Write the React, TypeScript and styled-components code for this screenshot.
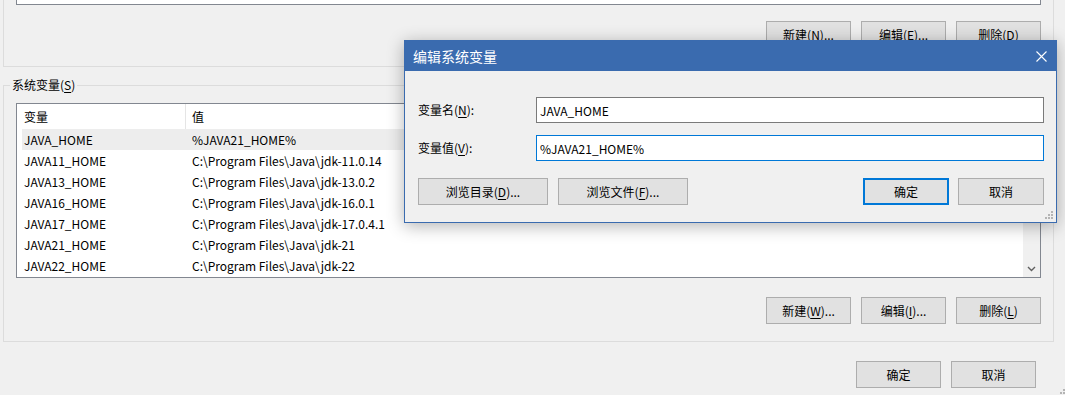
import React from 'react';
import styled, { createGlobalStyle, css } from 'styled-components';

const GlobalStyle = createGlobalStyle`
  html, body {
    margin: 0;
    padding: 0;
    background: #f0f0f0;
  }
  body {
    font-family: "Noto Sans CJK SC", "Microsoft YaHei", sans-serif;
    font-size: 12px;
    color: #000;
  }
`;

const variables = [
  ['JAVA_HOME', '%JAVA21_HOME%'],
  ['JAVA11_HOME', 'C:\\Program Files\\Java\\jdk-11.0.14'],
  ['JAVA13_HOME', 'C:\\Program Files\\Java\\jdk-13.0.2'],
  ['JAVA16_HOME', 'C:\\Program Files\\Java\\jdk-16.0.1'],
  ['JAVA17_HOME', 'C:\\Program Files\\Java\\jdk-17.0.4.1'],
  ['JAVA21_HOME', 'C:\\Program Files\\Java\\jdk-21'],
  ['JAVA22_HOME', 'C:\\Program Files\\Java\\jdk-22'],
];

const Grip = () => (
  <svg width='8' height='8' viewBox='0 0 8 8'>
    <rect x='6' y='0' width='2' height='2' fill='#b4b4b4' />
    <rect x='3' y='3' width='2' height='2' fill='#b4b4b4' />
    <rect x='6' y='3' width='2' height='2' fill='#b4b4b4' />
    <rect x='0' y='6' width='2' height='2' fill='#b4b4b4' />
    <rect x='3' y='6' width='2' height='2' fill='#b4b4b4' />
    <rect x='6' y='6' width='2' height='2' fill='#b4b4b4' />
  </svg>
);

const App = () => {
  return (
    <>
      <GlobalStyle />
      <Page>
        <UserGroup>
          <ListStub />
          <ButtonRow>
            <Button>
              新建(<Key>N</Key>)...
            </Button>
            <Button>
              编辑(<Key>E</Key>)...
            </Button>
            <Button>
              删除(<Key>D</Key>)
            </Button>
          </ButtonRow>
        </UserGroup>

        <SystemGroup>
          <Legend>
            系统变量(<Key>S</Key>)
          </Legend>
          <ListBox>
            <ListMain>
              <Header>
                <HeaderCell $first>变量</HeaderCell>
                <HeaderCell>值</HeaderCell>
              </Header>
              {variables.map(([name, value], index) => (
                <Row key={name} $selected={index === 0}>
                  <Cell>{name}</Cell>
                  <Cell>{value}</Cell>
                </Row>
              ))}
            </ListMain>
            <ScrollBar>
              <ArrowBox>
                <svg width='9' height='6' viewBox='0 0 9 6'>
                  <path d='M1 1 L4.5 4.5 L8 1' fill='none' stroke='#606060' strokeWidth='1.4' />
                </svg>
              </ArrowBox>
            </ScrollBar>
          </ListBox>
          <ButtonRow $top={19}>
            <Button>
              新建(<Key>W</Key>)...
            </Button>
            <Button>
              编辑(<Key>I</Key>)...
            </Button>
            <Button>
              删除(<Key>L</Key>)
            </Button>
          </ButtonRow>
        </SystemGroup>

        <FooterRow>
          <Button>确定</Button>
          <Button>取消</Button>
        </FooterRow>

        <PageGrip>
          <Grip />
        </PageGrip>

        <Dialog>
          <TitleBar>
            <Title>编辑系统变量</Title>
            <CloseButton>
              <svg width='11' height='11' viewBox='0 0 11 11'>
                <path d='M0.5 0.5 L10.5 10.5 M10.5 0.5 L0.5 10.5' stroke='#fff' strokeWidth='1.1' />
              </svg>
            </CloseButton>
          </TitleBar>
          <DialogBody>
            <FieldRow>
              <FieldLabel>
                变量名(<Key>N</Key>):
              </FieldLabel>
              <TextInput type='text' defaultValue='JAVA_HOME' />
            </FieldRow>
            <FieldRow>
              <FieldLabel>
                变量值(<Key>V</Key>):
              </FieldLabel>
              <TextInput type='text' defaultValue='%JAVA21_HOME%' $focused />
            </FieldRow>
            <DialogButtons>
              <Button $width={130}>
                浏览目录(<Key>D</Key>)...
              </Button>
              <Button $width={130}>
                浏览文件(<Key>F</Key>)...
              </Button>
              <RightButtons>
                <Button $width={86} $default>
                  确定
                </Button>
                <Button $width={86}>取消</Button>
              </RightButtons>
            </DialogButtons>
          </DialogBody>
          <DialogGrip>
            <Grip />
          </DialogGrip>
        </Dialog>
      </Page>
    </>
  );
};

export default App;

const Page = styled.div`
  position: relative;
  width: 1065px;
  height: 395px;
  overflow: hidden;
  padding-left: 3px;
  box-sizing: border-box;
  background: #f0f0f0;
`;

const Key = styled.u`
  text-decoration-thickness: 1px;
  text-underline-offset: 2px;
`;

const UserGroup = styled.div`
  width: 1051px;
  box-sizing: border-box;
  border: 1px solid #dcdcdc;
  border-top: none;
  padding: 0 12px 18px;
`;

const ListStub = styled.div`
  height: 4px;
  background: #fff;
  border: 1px solid #828790;
  border-top: none;
`;

const ButtonRow = styled.div<{ $top?: number }>`
  display: flex;
  justify-content: flex-end;
  gap: 10px;
  margin-top: ${({ $top }) => $top ?? 16}px;
`;

const Button = styled.button<{ $width?: number; $default?: boolean }>`
  width: ${({ $width }) => $width ?? 85}px;
  height: 27px;
  box-sizing: border-box;
  padding: 0;
  border: 1px solid #adadad;
  background: #e1e1e1;
  color: #000;
  font: inherit;
  line-height: 16px;
  white-space: nowrap;

  ${({ $default }) =>
    $default &&
    css`
      border: 2px solid #0078d7;
    `}
`;

const SystemGroup = styled.fieldset`
  width: 1051px;
  box-sizing: border-box;
  min-width: 0;
  margin: 10px 0 0;
  padding: 10px 12px 17px;
  border: 1px solid #dcdcdc;
`;

const Legend = styled.legend`
  padding: 0 2px;
  margin-left: -6px;
  line-height: 16px;
`;

const ListBox = styled.div`
  display: flex;
  height: 175px;
  box-sizing: border-box;
  border: 1px solid #828790;
  background: #fff;
`;

const ListMain = styled.div`
  flex: 1;
  display: flex;
  flex-direction: column;
`;

const Header = styled.div`
  display: grid;
  grid-template-columns: 169px 1fr;
  height: 25px;
`;

const HeaderCell = styled.div<{ $first?: boolean }>`
  box-sizing: border-box;
  line-height: 25px;
  padding-left: ${({ $first }) => ($first ? 7 : 6)}px;
  border-right: ${({ $first }) => ($first ? '1px solid #e5e5e5' : 'none')};
`;

const Row = styled.div<{ $selected?: boolean }>`
  display: grid;
  grid-template-columns: 168px 1fr;
  height: 21px;
  margin-left: 5px;
  background: ${({ $selected }) => ($selected ? '#ededed' : 'transparent')};
`;

const Cell = styled.div`
  padding-left: 2px;
  line-height: 21px;
  white-space: nowrap;
`;

const ScrollBar = styled.div`
  width: 17px;
  background: #f0f0f0;
  display: flex;
  flex-direction: column;
  justify-content: flex-end;
`;

const ArrowBox = styled.div`
  height: 17px;
  display: flex;
  align-items: center;
  justify-content: center;
`;

const FooterRow = styled.div`
  width: 1051px;
  box-sizing: border-box;
  display: flex;
  justify-content: flex-end;
  gap: 10px;
  margin-top: 19px;
  padding-right: 18px;
`;

const PageGrip = styled.div`
  position: absolute;
  right: 0;
  bottom: -5px;
`;

const Dialog = styled.div`
  position: absolute;
  left: 404px;
  top: 40px;
  width: 653px;
  height: 183px;
  box-sizing: border-box;
  border: 1px solid #3a6baf;
  background: #f0f0f0;
  box-shadow: 0 3px 16px rgba(0, 0, 0, 0.3);
  display: flex;
  flex-direction: column;
`;

const TitleBar = styled.div`
  display: flex;
  align-items: center;
  height: 30px;
  padding-left: 8px;
  background: #3a6baf;
  color: #fff;
`;

const Title = styled.span`
  font-size: 14px;
  line-height: 20px;
`;

const CloseButton = styled.div`
  width: 30px;
  height: 30px;
  margin-left: auto;
  display: flex;
  align-items: center;
  justify-content: center;
`;

const DialogBody = styled.div`
  display: flex;
  flex-direction: column;
  gap: 12px;
  padding: 26px 12px 0 13px;
`;

const FieldRow = styled.div`
  display: flex;
  align-items: center;
`;

const FieldLabel = styled.label`
  width: 118px;
  line-height: 16px;
`;

const TextInput = styled.input<{ $focused?: boolean }>`
  flex: 1;
  height: 26px;
  box-sizing: border-box;
  padding: 0 3px;
  border: 1px solid ${({ $focused }) => ($focused ? '#0078d7' : '#7a7a7a')};
  background: #fff;
  color: #000;
  font: inherit;
  outline: none;
`;

const DialogButtons = styled.div`
  display: flex;
  gap: 10px;
  margin-top: 5px;
`;

const RightButtons = styled.div`
  display: flex;
  gap: 9px;
  margin-left: auto;
`;

const DialogGrip = styled.div`
  position: absolute;
  right: 3px;
  bottom: 3px;
  line-height: 0;
`;
